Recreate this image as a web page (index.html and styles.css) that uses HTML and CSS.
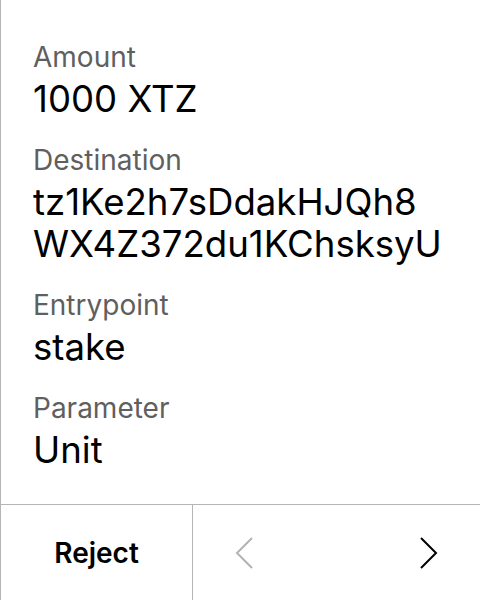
FILE: index.html
```html
<!DOCTYPE html>
<html>
<head>
<meta charset="utf-8">
<link rel="stylesheet" href="styles.css">
</head>
<body>
<div class="screen">
  <div class="content">
    <div class="field">
      <div class="label">Amount</div>
      <div class="value">1000 XTZ</div>
    </div>
    <div class="field">
      <div class="label">Destination</div>
      <div class="value">tz1Ke2h7sDdakHJQh8<br>WX4Z372du1KChsksyU</div>
    </div>
    <div class="field">
      <div class="label">Entrypoint</div>
      <div class="value">stake</div>
    </div>
    <div class="field">
      <div class="label">Parameter</div>
      <div class="value">Unit</div>
    </div>
  </div>
  <div class="footer">
    <div class="reject">Reject</div>
    <div class="nav">
      <svg class="arrow" width="18" height="32" viewBox="0 0 18 32"><path d="M17 1 L2 16 L17 31" fill="none" stroke="#b3b3b3" stroke-width="2"/></svg>
      <svg class="arrow" width="18" height="32" viewBox="0 0 18 32"><path d="M1 1 L16 16 L1 31" fill="none" stroke="#000" stroke-width="2"/></svg>
    </div>
  </div>
</div>
</body>
</html>
```
FILE: styles.css
```css
html, body {
  margin: 0;
  padding: 0;
  background: #fff;
}
.screen {
  width: 480px;
  height: 600px;
  box-sizing: border-box;
  border-left: 1px solid #b5b5b5;
  display: flex;
  flex-direction: column;
  font-family: Inter, "Noto Sans", sans-serif;
  color: #000;
}
.content {
  flex: 1;
  padding: 40px 0 0 32px;
  display: flex;
  flex-direction: column;
  gap: 23px;
}
.label {
  font-size: 28px;
  line-height: 34px;
  color: #5f5f5f;
}
.value {
  font-size: 36.6px;
  line-height: 42px;
  margin-top: 4px;
}
.footer {
  height: 95px;
  border-top: 1px solid #b5b5b5;
  display: flex;
}
.reject {
  width: 191px;
  border-right: 1px solid #b5b5b5;
  display: flex;
  align-items: center;
  justify-content: center;
  font-size: 28px;
  font-weight: 600;
}
.nav {
  flex: 1;
  display: flex;
  align-items: center;
  justify-content: space-between;
  padding: 0 42px;
}
.arrow {
  display: block;
}
```
